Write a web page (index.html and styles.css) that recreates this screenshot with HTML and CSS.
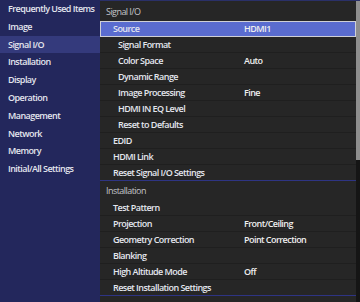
FILE: index.html
```html
<!DOCTYPE html>
<html lang="en">
<head>
  <meta charset="UTF-8" />
  <title>Settings Menu</title>
  <link rel="stylesheet" href="styles.css">
</head>
<body>
  <div class="menu">
    <ul class="categories">
      <li>Frequently Used Items</li>
      <li>Image</li>
      <li class="active">Signal I/O</li>
      <li>Installation</li>
      <li>Display</li>
      <li>Operation</li>
      <li>Management</li>
      <li>Network</li>
      <li>Memory</li>
      <li>Initial/All Settings</li>
    </ul>

    <div class="panel">
      <div class="items">
        <div class="section first">Signal I/O</div>
        <div class="row lvl1 selected"><span>Source</span><span class="value">HDMI1</span></div>
        <div class="row lvl2"><span>Signal Format</span></div>
        <div class="row lvl2"><span>Color Space</span><span class="value">Auto</span></div>
        <div class="row lvl2"><span>Dynamic Range</span></div>
        <div class="row lvl2"><span>Image Processing</span><span class="value">Fine</span></div>
        <div class="row lvl2"><span>HDMI IN EQ Level</span></div>
        <div class="row lvl2"><span>Reset to Defaults</span></div>
        <div class="row lvl1"><span>EDID</span></div>
        <div class="row lvl1"><span>HDMI Link</span></div>
        <div class="row lvl1 last"><span>Reset Signal I/O Settings</span></div>

        <div class="section">Installation</div>
        <div class="row lvl1"><span>Test Pattern</span></div>
        <div class="row lvl1"><span>Projection</span><span class="value">Front/Ceiling</span></div>
        <div class="row lvl1"><span>Geometry Correction</span><span class="value">Point Correction</span></div>
        <div class="row lvl1"><span>Blanking</span></div>
        <div class="row lvl1"><span>High Altitude Mode</span><span class="value">Off</span></div>
        <div class="row lvl1 last"><span>Reset Installation Settings</span></div>
      </div>
      <div class="scrollbar"><div class="thumb"></div></div>
    </div>
  </div>
</body>
</html>
```

FILE: styles.css
```css
body {
  margin: 0;
  background: #262626;
  font-family: 'Open Sans', 'Noto Sans', sans-serif;
  font-size: 9px;
  font-weight: 600;
  letter-spacing: -0.55px;
  color: #e4e6ee;
}

.menu {
  display: flex;
  width: 360px;
  height: 302px;
  overflow: hidden;
}

.categories {
  list-style: none;
  margin: 0;
  padding: 0;
  width: 100px;
  flex: 0 0 100px;
  background: #23275c;
}

.categories li {
  height: 17.8px;
  line-height: 17.8px;
  padding-left: 8px;
  white-space: nowrap;
}

.categories li.active {
  background: #343a7c;
}

.panel {
  flex: 1;
  display: flex;
  background: #262626;
  border-top: 1px solid #2a3068;
}

.items {
  flex: 1;
}

.section {
  height: 19px;
  line-height: 19px;
  padding-left: 6px;
  color: #c4c4c8;
  font-weight: 400;
}

.section.first {
  height: 20px;
  line-height: 21px;
}

.row {
  display: flex;
  height: 15px;
  line-height: 15px;
  border-bottom: 1px solid #1f1f1f;
  white-space: nowrap;
}

.row span:first-child {
  width: 131px;
}

.lvl1 {
  padding-left: 13px;
}

.lvl2 {
  padding-left: 18px;
}

.lvl2 span:first-child {
  width: 126px;
}

.row.last {
  border-bottom: 1px solid #2e3483;
}

.row.selected {
  height: 14px;
  line-height: 14px;
  background: #5a6ccf;
  border: 1px solid #cfd0d6;
  padding-left: 12px;
}

.value {
  color: #eeeeee;
}

.scrollbar {
  width: 4px;
  flex: 0 0 4px;
  background: #151515;
}

.thumb {
  height: 159px;
  background: #8e8e8e;
}
```
